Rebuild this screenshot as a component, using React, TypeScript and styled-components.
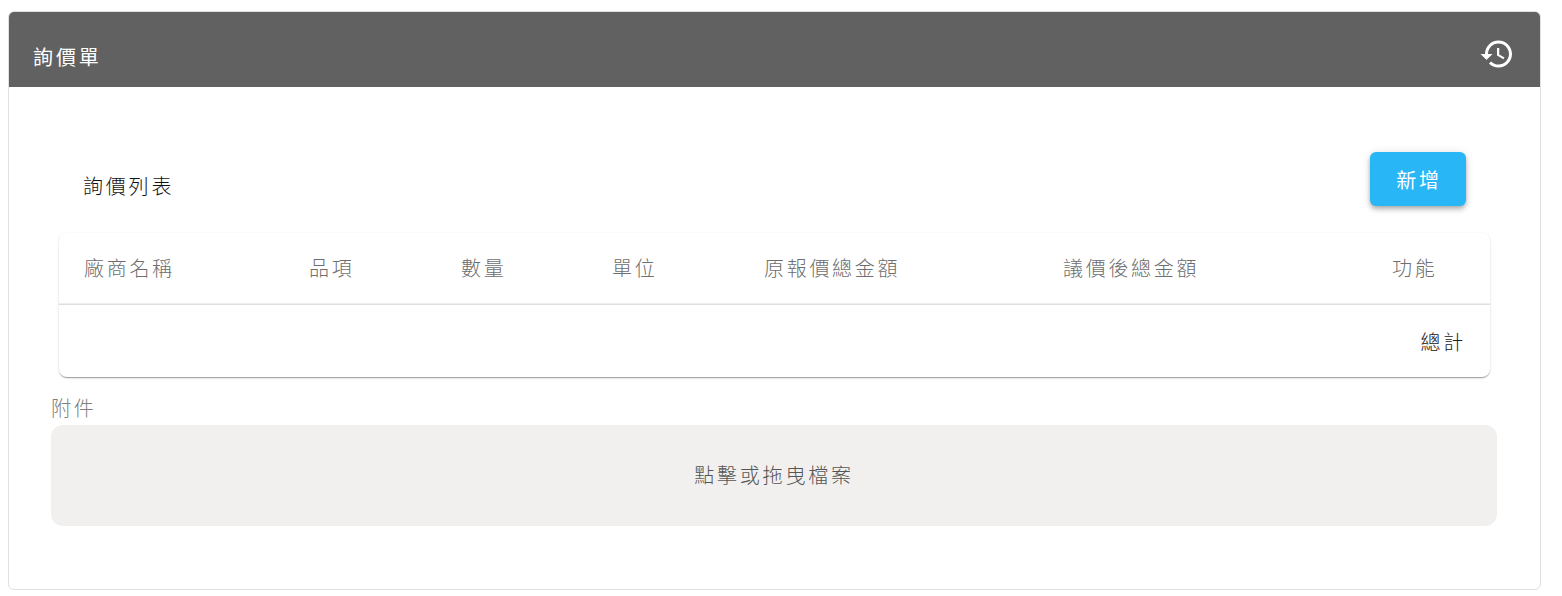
import React from "react";
import styled, { createGlobalStyle } from "styled-components";

const Global = createGlobalStyle`
  html, body { margin: 0; padding: 0; background: #fff; }
  body { font-family: Roboto, "Noto Sans CJK TC", sans-serif; font-weight: 300; }
`;

const Page = styled.div`
  box-sizing: border-box;
  width: 1562px;
  height: 596px;
  padding: 11px 21px 6px 8px;
`;

const Card = styled.section`
  box-sizing: border-box;
  height: 579px;
  border: 1px solid #e0e0e0;
  border-radius: 6px;
  overflow: hidden;
`;

const Header = styled.header`
  box-sizing: border-box;
  height: 75px;
  background: #616161;
  color: #fff;
  display: flex;
  align-items: flex-start;
  justify-content: space-between;
  padding: 23px 25px 0 24px;
`;

const HeaderTitle = styled.h1`
  margin: 8px 0 0;
  font-size: 20px;
  line-height: 30px;
  font-weight: 400;
  letter-spacing: 2.9px;
`;

const HistoryIcon = styled.svg`
  width: 36px;
  height: 36px;
  margin-top: 1px;
  fill: #fff;
  display: block;
`;

const Body = styled.div`
  padding: 65px 42px 0;
`;

const ListSection = styled.div`
  padding: 0 8px;
`;

const ListBar = styled.div`
  display: flex;
  justify-content: space-between;
  padding: 0 24px 0 25px;
  height: 81px;
`;

const ListTitle = styled.h2`
  margin: 20px 0 0 -1px;
  font-size: 20px;
  line-height: 30px;
  font-weight: 300;
  letter-spacing: 2.8px;
  color: #111;
`;

const AddButton = styled.button`
  width: 96px;
  height: 54px;
  padding: 0 0 0 2px;
  border: 0;
  border-radius: 6px;
  background: #29b6f6;
  color: #fff;
  font: inherit;
  font-size: 20px;
  font-weight: 400;
  letter-spacing: 2.7px;
  box-shadow: 0 2px 4px -1px rgba(0, 0, 0, 0.2), 0 4px 5px 0 rgba(0, 0, 0, 0.14), 0 1px 10px 0 rgba(0, 0, 0, 0.12);
`;

const TableCard = styled.div`
  height: 144px;
  border-radius: 8px;
  background: #fff;
  box-shadow: 0 2px 1px -1px rgba(0, 0, 0, 0.2), 0 1px 1px 0 rgba(0, 0, 0, 0.14), 0 1px 3px 0 rgba(0, 0, 0, 0.12);
`;

const HeadRow = styled.div`
  box-sizing: border-box;
  height: 72px;
  display: grid;
  grid-template-columns: 225px 152px 151px 152px 299px 329px 123px;
  align-items: center;
  border-bottom: 1px solid #dedede;
  box-shadow: inset 0 -1px 0 #eeeeee;
`;

const HeadCell = styled.div`
  padding-left: 25px;
  font-size: 20px;
  line-height: 30px;
  letter-spacing: 2.7px;
  color: #6e6e6e;
  white-space: nowrap;
`;

const TotalRow = styled.div`
  height: 72px;
  display: flex;
  align-items: center;
  justify-content: flex-end;
  padding-right: 24px;
  font-size: 20px;
  letter-spacing: 2.7px;
  color: #212121;
`;

const AttachLabel = styled.div`
  margin-top: 17px;
  font-size: 20px;
  line-height: 30px;
  letter-spacing: 2.7px;
  color: #808080;
  height: 31px;
`;

const DropZone = styled.div`
  height: 101px;
  margin-right: 1px;
  padding-bottom: 2px;
  box-sizing: border-box;
  border-radius: 12px;
  background: #f1f0ee;
  color: #555555;
  display: flex;
  align-items: center;
  justify-content: center;
  font-size: 20px;
  letter-spacing: 2.8px;
`;

const columns = ["廠商名稱", "品項", "數量", "單位", "原報價總金額", "議價後總金額", "功能"];

export default function App() {
  return (
    <Page>
      <Global />
      <Card>
        <Header>
          <HeaderTitle>詢價單</HeaderTitle>
          <HistoryIcon viewBox="0 0 24 24" aria-hidden="true">
            <path d="M13 3c-4.97 0-9 4.03-9 9H1l3.89 3.89.07.14L9 12H6c0-3.87 3.13-7 7-7s7 3.13 7 7-3.13 7-7 7c-1.93 0-3.68-.79-4.94-2.06l-1.42 1.42C8.27 19.99 10.51 21 13 21c4.97 0 9-4.03 9-9s-4.03-9-9-9zm-1 5v5l4.28 2.54.72-1.21-3.5-2.08V8H12z" />
          </HistoryIcon>
        </Header>
        <Body>
          <ListSection>
            <ListBar>
              <ListTitle>詢價列表</ListTitle>
              <AddButton>新增</AddButton>
            </ListBar>
            <TableCard>
              <HeadRow>
                {columns.map((c) => (
                  <HeadCell key={c}>{c}</HeadCell>
                ))}
              </HeadRow>
              <TotalRow>總計</TotalRow>
            </TableCard>
          </ListSection>
          <AttachLabel>附件</AttachLabel>
          <DropZone>點擊或拖曳檔案</DropZone>
        </Body>
      </Card>
    </Page>
  );
}
